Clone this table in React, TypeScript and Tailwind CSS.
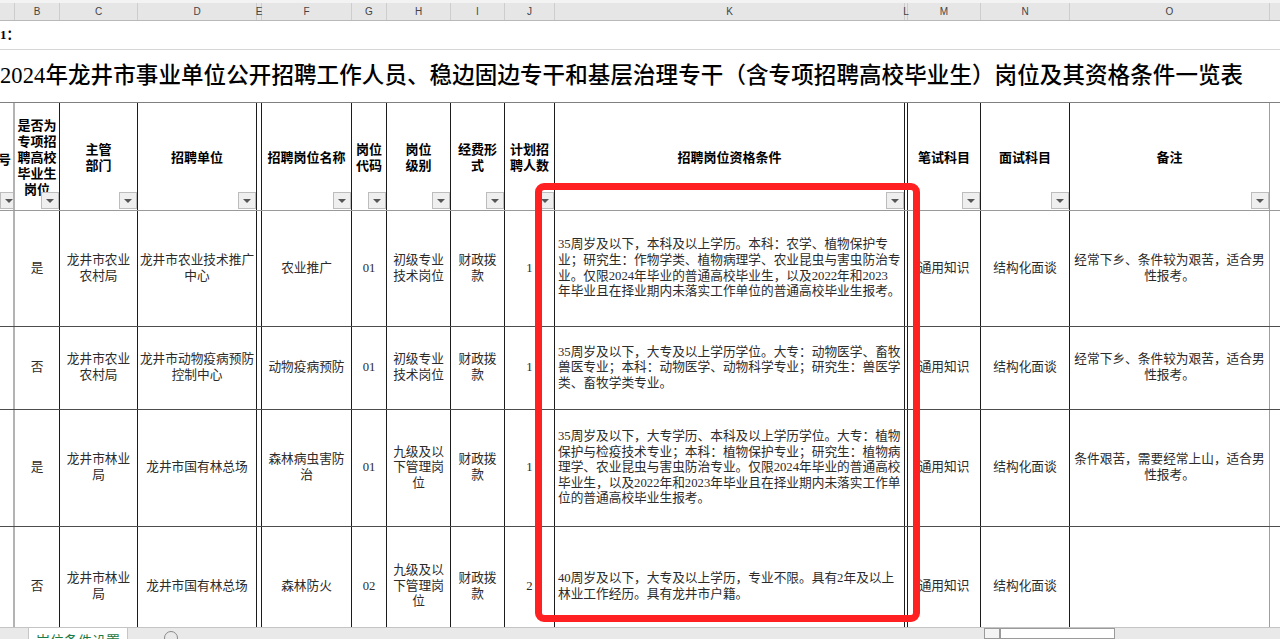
import React from "react";

const W = [
  "w-[15px]",
  "w-[45px]",
  "w-[78px]",
  "w-[119px]",
  "w-[5px]",
  "w-[90px]",
  "w-[35px]",
  "w-[64px]",
  "w-[54px]",
  "w-[50px]",
  "w-[350px]",
  "w-[3px]",
  "w-[73px]",
  "w-[89px]",
  "w-[200px]",
  "w-[10px]",
];

const VB = (i: number) =>
  i === 0
    ? "border-r-2 border-r-[#b3b3b3]"
    : i === 14
    ? "border-r border-r-[#a0a0a0]"
    : i === 15
    ? ""
    : "border-r border-r-[#1c1c1c]";

const LETTERS = ["", "B", "C", "D", "E", "F", "G", "H", "I", "J", "K", "L", "M", "N", "O", ""];

const HEAD: string[][] = [
  [],
  ["是否为", "专项招", "聘高校", "毕业生", "岗位"],
  ["主管", "部门"],
  ["招聘单位"],
  [],
  ["招聘岗位名称"],
  ["岗位", "代码"],
  ["岗位", "级别"],
  ["经费形", "式"],
  ["计划招", "聘人数"],
  ["招聘岗位资格条件"],
  [],
  ["笔试科目"],
  ["面试科目"],
  ["备注"],
  [],
];

const HAS_DD = [true, true, true, true, false, true, true, true, true, true, true, false, true, true, true, false];

type Row = { h: string; cells: string[][] };

const ROWS: Row[] = [
  {
    h: "h-[116px]",
    cells: [
      [],
      ["是"],
      ["龙井市农业", "农村局"],
      ["龙井市农业技术推广", "中心"],
      [],
      ["农业推广"],
      ["01"],
      ["初级专业", "技术岗位"],
      ["财政拨", "款"],
      ["1"],
      [
        "35周岁及以下，本科及以上学历。本科：农学、植物保护专",
        "业；研究生：作物学类、植物病理学、农业昆虫与害虫防治专",
        "业。仅限2024年毕业的普通高校毕业生，以及2022年和2023",
        "年毕业且在择业期内未落实工作单位的普通高校毕业生报考。",
      ],
      [],
      ["通用知识"],
      ["结构化面谈"],
      ["经常下乡、条件较为艰苦，适合男", "性报考。"],
      [],
    ],
  },
  {
    h: "h-[83px]",
    cells: [
      [],
      ["否"],
      ["龙井市农业", "农村局"],
      ["龙井市动物疫病预防", "控制中心"],
      [],
      ["动物疫病预防"],
      ["01"],
      ["初级专业", "技术岗位"],
      ["财政拨", "款"],
      ["1"],
      [
        "35周岁及以下，大专及以上学历学位。大专：动物医学、畜牧",
        "兽医专业；本科：动物医学、动物科学专业；研究生：兽医学",
        "类、畜牧学类专业。",
      ],
      [],
      ["通用知识"],
      ["结构化面谈"],
      ["经常下乡、条件较为艰苦，适合男", "性报考。"],
      [],
    ],
  },
  {
    h: "h-[117px]",
    cells: [
      [],
      ["是"],
      ["龙井市林业", "局"],
      ["龙井市国有林总场"],
      [],
      ["森林病虫害防", "治"],
      ["01"],
      ["九级及以", "下管理岗", "位"],
      ["财政拨", "款"],
      ["1"],
      [
        "35周岁及以下，大专学历、本科及以上学历学位。大专：植物",
        "保护与检疫技术专业；本科：植物保护专业；研究生：植物病",
        "理学、农业昆虫与害虫防治专业。仅限2024年毕业的普通高校",
        "毕业生，以及2022年和2023年毕业且在择业期内未落实工作单",
        "位的普通高校毕业生报考。",
      ],
      [],
      ["通用知识"],
      ["结构化面谈"],
      ["条件艰苦，需要经常上山，适合男", "性报考。"],
      [],
    ],
  },
  {
    h: "h-[120px]",
    cells: [
      [],
      ["否"],
      ["龙井市林业", "局"],
      ["龙井市国有林总场"],
      [],
      ["森林防火"],
      ["02"],
      ["九级及以", "下管理岗", "位"],
      ["财政拨", "款"],
      ["2"],
      [
        "40周岁及以下，大专及以上学历，专业不限。具有2年及以上",
        "林业工作经历。具有龙井市户籍。",
      ],
      [],
      ["通用知识"],
      ["结构化面谈"],
      [],
      [],
    ],
  },
];

function Dropdown({ left }: { left?: boolean }) {
  return (
    <div
      className={
        "absolute bottom-[1px] w-[18px] h-[17px] border border-[#bdbdbd] bg-[#efefef] flex items-center justify-center " +
        (left ? "left-0 w-[14px]" : "right-0")
      }
    >
      <div className="w-0 h-0 border-l-[4px] border-r-[4px] border-t-[4px] border-l-transparent border-r-transparent border-t-[#555]" />
    </div>
  );
}

export default function App() {
  return (
    <div className="w-[1280px] h-[639px] overflow-hidden flex flex-col bg-white font-['Liberation_Serif','Noto_Sans_CJK_SC',serif] text-black">
      <div className="relative h-[627px] overflow-hidden flex flex-col shrink-0">
        {/* Column letters */}
        <div className="flex h-[21px] shrink-0 bg-[#e6e6e6] border-t-[3px] border-t-[#f3f3f3] border-b border-b-[#b9b9b9]">
          {LETTERS.map((l, i) => (
            <div
              key={i}
              className={
                W[i] +
                " shrink-0 flex items-center justify-center overflow-visible text-[10px] text-[#444] font-['Liberation_Sans',sans-serif] " +
                (i === 15 ? "" : "border-r border-r-[#cdcdcd]")
              }
            >
              {l}
            </div>
          ))}
        </div>

        {/* Row "1：" */}
        <div className="h-[29px] shrink-0 flex items-center border-b border-b-[#d6d6d6] text-[13px] font-bold pl-0">
          1：
        </div>

        {/* Title */}
        <div className="h-[52px] shrink-0 flex items-center whitespace-nowrap text-[22.5px] font-medium tracking-[0.1px]">
          2024年龙井市事业单位公开招聘工作人员、稳边固边专干和基层治理专干（含专项招聘高校毕业生）岗位及其资格条件一览表
        </div>

        {/* Header row */}
        <div className="flex h-[109px] shrink-0 border-t border-t-[#808080] border-b border-b-[#9a9a9a]">
          {HEAD.map((lines, i) => (
            <div
              key={i}
              className={
                W[i] +
                " " +
                VB(i) +
                " shrink-0 relative flex flex-col items-center justify-center pt-[3px] text-[13px] leading-[16px] font-bold text-center " +
                (i === 0 ? "overflow-hidden" : "overflow-visible")
              }
            >
              {i === 0 ? (
                <div className="absolute right-[2px] top-[49px] whitespace-nowrap">序号</div>
              ) : (
                lines.map((t, k) => (
                  <div key={k} className="whitespace-nowrap">
                    {t}
                  </div>
                ))
              )}
              {HAS_DD[i] && <Dropdown left={i === 0} />}
            </div>
          ))}
        </div>

        {/* Data rows */}
        {ROWS.map((row, r) => (
          <div key={r} className={"flex shrink-0 border-b border-b-[#4d4d4d] " + row.h}>
            {row.cells.map((lines, i) => (
              <div
                key={i}
                className={
                  W[i] +
                  " " +
                  VB(i) +
                  " shrink-0 flex flex-col justify-center text-[12.7px] leading-[15.6px] text-[#2b2b2b] " +
                  (i === 10 ? "items-start pl-[3px]" : "items-center text-center")
                }
              >
                {lines.map((t, k) => (
                  <div key={k} className="whitespace-nowrap">
                    {t}
                  </div>
                ))}
              </div>
            ))}
          </div>
        ))}

        {/* Red annotation box */}
        <div className="absolute left-[535px] top-[183px] w-[385px] h-[439px] border-[7px] border-[#ff2121] rounded-[9px]" />
      </div>

      {/* Sheet tab bar */}
      <div className="h-[12px] shrink-0 bg-[#e9e9e9] border-t border-t-[#c4c4c4] flex overflow-hidden">
        <div className="w-[29px] shrink-0 border-r border-r-[#c6c6c6]" />
        <div className="w-[99px] shrink-0 bg-white border-r border-r-[#c6c6c6] pl-[7px] pt-[4px] text-[14px] leading-[16px] text-[#1e7a45] whitespace-nowrap font-['Noto_Sans_CJK_SC',sans-serif]">
          岗位条件设置
        </div>
        <div className="ml-[36px] mt-[3px] w-[14px] h-[14px] shrink-0 rounded-full border border-[#8a8a8a]" />
        <div className="ml-[806px] w-[16px] shrink-0 border border-[#9a9a9a] bg-[#f4f4f4]" />
        <div className="w-[115px] shrink-0 border border-[#9a9a9a] bg-white" />
      </div>
    </div>
  );
}
